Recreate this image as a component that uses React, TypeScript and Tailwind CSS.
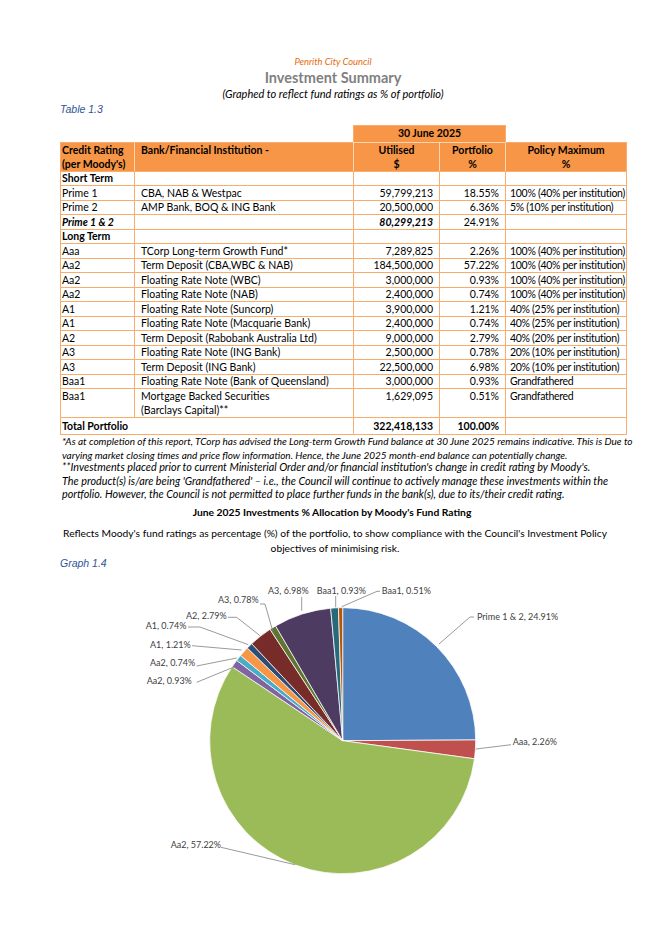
import React from "react";

const F = "font-['Lato',sans-serif]";

type Row = {
  r: string;
  b: string;
  u: string;
  p: string;
  m: string;
  kind?: "section" | "sub";
};

const rows: Row[] = [
  { r: "Short Term", b: "", u: "", p: "", m: "", kind: "section" },
  { r: "Prime 1", b: "CBA, NAB & Westpac", u: "59,799,213", p: "18.55%", m: "100% (40% per institution)" },
  { r: "Prime 2", b: "AMP Bank, BOQ & ING Bank", u: "20,500,000", p: "6.36%", m: "5% (10% per institution)" },
  { r: "Prime 1 & 2", b: "", u: "80,299,213", p: "24.91%", m: "", kind: "sub" },
  { r: "Long Term", b: "", u: "", p: "", m: "", kind: "section" },
  { r: "Aaa", b: "TCorp Long-term Growth Fund*", u: "7,289,825", p: "2.26%", m: "100% (40% per institution)" },
  { r: "Aa2", b: "Term Deposit (CBA,WBC & NAB)", u: "184,500,000", p: "57.22%", m: "100% (40% per institution)" },
  { r: "Aa2", b: "Floating Rate Note (WBC)", u: "3,000,000", p: "0.93%", m: "100% (40% per institution)" },
  { r: "Aa2", b: "Floating Rate Note (NAB)", u: "2,400,000", p: "0.74%", m: "100% (40% per institution)" },
  { r: "A1", b: "Floating Rate Note (Suncorp)", u: "3,900,000", p: "1.21%", m: "40% (25% per institution)" },
  { r: "A1", b: "Floating Rate Note (Macquarie Bank)", u: "2,400,000", p: "0.74%", m: "40% (25% per institution)" },
  { r: "A2", b: "Term Deposit (Rabobank Australia Ltd)", u: "9,000,000", p: "2.79%", m: "40% (20% per institution)" },
  { r: "A3", b: "Floating Rate Note (ING Bank)", u: "2,500,000", p: "0.78%", m: "20% (10% per institution)" },
  { r: "A3", b: "Term Deposit (ING Bank)", u: "22,500,000", p: "6.98%", m: "20% (10% per institution)" },
  { r: "Baa1", b: "Floating Rate Note (Bank of Queensland)", u: "3,000,000", p: "0.93%", m: "Grandfathered" },
];

const slices = [
  { v: 24.91, c: "#4f81bd" },
  { v: 2.26, c: "#c0504d" },
  { v: 57.22, c: "#9bbb59" },
  { v: 0.93, c: "#8064a2" },
  { v: 0.74, c: "#4bacc6" },
  { v: 1.21, c: "#f79646" },
  { v: 0.74, c: "#2c4d75" },
  { v: 2.79, c: "#772c2a" },
  { v: 0.78, c: "#5f7530" },
  { v: 6.98, c: "#4d3b62" },
  { v: 0.93, c: "#276a7c" },
  { v: 0.51, c: "#b65708" },
];

const labels = [
  { t: "Prime 1 & 2, 24.91%", x: 477, y: 620.7, pts: "439,645 470,618 474,618" },
  { t: "Aaa, 2.26%", x: 512.7, y: 745.7, pts: "476,750 511,745.7" },
  { t: "Aa2, 57.22%", x: 170.7, y: 848.7, pts: "221,848.3 295,865.7" },
  { t: "Aa2, 0.93%", x: 146.7, y: 684.7, pts: "196.7,683.3 234,668" },
  { t: "Aa2, 0.74%", x: 150, y: 667.3, pts: "196.7,667 236.7,659" },
  { t: "A1, 1.21%", x: 150, y: 649, pts: "192,646.7 241.7,651" },
  { t: "A1, 0.74%", x: 145.7, y: 630.3, pts: "188,628 200,628 248.3,645.7" },
  { t: "A2, 2.79%", x: 186, y: 619.7, pts: "228,618.3 236.7,618.3 260,636.7" },
  { t: "A3, 0.78%", x: 218, y: 604, pts: "260,605 265,605 273.3,634" },
  { t: "A3, 6.98%", x: 268, y: 595.3, pts: "301.7,598 301.7,611.7" },
  { t: "Baa1, 0.93%", x: 316.7, y: 595, pts: "335.7,597 335.7,608.3" },
  { t: "Baa1, 0.51%", x: 381.7, y: 594.7, pts: "380,592.3 377,592.3 341.7,607.7" },
];

function Pie() {
  const cx = 342.7;
  const cy = 741.7;
  const r = 133;
  let acc = 0;
  const paths = slices.map((s, i) => {
    const a0 = (acc / 100) * Math.PI * 2;
    acc += s.v;
    const a1 = (acc / 100) * Math.PI * 2;
    const x0 = cx + r * Math.sin(a0);
    const y0 = cy - r * Math.cos(a0);
    const x1 = cx + r * Math.sin(a1);
    const y1 = cy - r * Math.cos(a1);
    const large = a1 - a0 > Math.PI ? 1 : 0;
    const d = `M${cx},${cy} L${x0},${y0} A${r},${r} 0 ${large} 1 ${x1},${y1} Z`;
    return <path key={i} d={d} fill={s.c} stroke="#ffffff" strokeWidth={0.75} strokeLinejoin="round" />;
  });
  return (
    <svg width={566} height={300} viewBox="60 580 566 300" className="block mt-[8.7px]">
      {paths}
      {labels.map((l, i) => (
        <g key={i}>
          <polyline points={l.pts} fill="none" stroke="#808080" strokeWidth={0.8} />
          <text x={l.x} y={l.y} fontSize={9} fill="#404040" fontFamily="Lato, sans-serif">
            {l.t}
          </text>
        </g>
      ))}
    </svg>
  );
}

const bd = "border border-[#f8ad6c]";
const hd = "border border-[#f8ad6c] border-x-[#fcd5b2]";

export default function App() {
  return (
    <div className={`w-[656px] h-[928px] bg-white text-black ${F} overflow-hidden`}>
      <div className="w-[566px] ml-[60px] pt-[53.7px]">
        <div className="w-[546px] text-center">
          <div className="text-[9.4px] italic text-[#e46c0a] leading-[16px]">Penrith City Council</div>
          <div className="text-[14.5px] font-bold text-[#7f7f7f] leading-[16px]">Investment Summary</div>
          <div className="text-[11px] italic leading-[16px]">(Graphed to reflect fund ratings as % of portfolio)</div>
        </div>
        <div className="font-['Liberation_Sans',sans-serif] text-[10.5px] italic text-[#2f5597] leading-[14px]">
          Table 1.3
        </div>
        <table className="mt-[9.3px] w-[566px] table-fixed border-collapse text-[10.5px] leading-[13px]">
          <colgroup>
            <col className="w-[74px]" />
            <col className="w-[219px]" />
            <col className="w-[86px]" />
            <col className="w-[66px]" />
            <col className="w-[121px]" />
          </colgroup>
          <tbody>
            <tr className="h-[17px]">
              <td colSpan={2} />
              <td
                colSpan={2}
                className="border-x border-t border-b border-x-[#f8ad6c] border-t-[#f8ad6c] border-b-[#fcd5b2] bg-[#f79646] text-center font-bold"
              >
                30 June 2025
              </td>
              <td />
            </tr>
            <tr className="h-[28px] bg-[#f79646] font-bold align-top leading-[14px]">
              <td className={`${hd} border-l-[#f8ad6c] px-[1px]`}>
                <div className="whitespace-nowrap">Credit Rating</div>
                <div className="whitespace-nowrap">(per Moody's)</div>
              </td>
              <td className={`${hd} px-[6px]`}>Bank/Financial Institution -</td>
              <td className={`${hd} text-center`}>
                <div>Utilised</div>
                <div>$</div>
              </td>
              <td className={`${hd} text-center`}>
                <div>Portfolio</div>
                <div>%</div>
              </td>
              <td className={`${hd} border-r-[#f8ad6c] text-center`}>
                <div>Policy Maximum</div>
                <div>%</div>
              </td>
            </tr>
            {rows.map((row, i) => {
              const isSec = row.kind === "section";
              const isSub = row.kind === "sub";
              return (
                <tr key={i} className="h-[14.5px]">
                  <td className={`${bd} px-[1px] whitespace-nowrap ${isSec ? "font-bold" : ""} ${isSub ? "font-bold italic" : ""}`}>
                    {row.r}
                  </td>
                  <td className={`${bd} px-[6px] whitespace-nowrap`}>{row.b}</td>
                  <td className={`${bd} pr-[6px] text-right whitespace-nowrap ${isSub ? "font-bold italic" : ""}`}>{row.u}</td>
                  <td className={`${bd} pr-[6px] text-right whitespace-nowrap`}>{row.p}</td>
                  <td className={`${bd} pl-[4px] pr-0 whitespace-nowrap tracking-[-0.3px]`}>{row.m}</td>
                </tr>
              );
            })}
            <tr className="h-[29px] align-top leading-[14px]">
              <td className={`${bd} px-[1px]`}>Baa1</td>
              <td className={`${bd} px-[6px]`}>
                <div>Mortgage Backed Securities</div>
                <div>(Barclays Capital)**</div>
              </td>
              <td className={`${bd} pr-[6px] text-right`}>1,629,095</td>
              <td className={`${bd} pr-[6px] text-right`}>0.51%</td>
              <td className={`${bd} pl-[4px] tracking-[-0.3px]`}>Grandfathered</td>
            </tr>
            <tr className="h-[16.5px] font-bold">
              <td colSpan={2} className={`${bd} px-[1px]`}>
                Total Portfolio
              </td>
              <td className={`${bd} pr-[6px] text-right`}>322,418,133</td>
              <td className={`${bd} pr-[6px] text-right`}>100.00%</td>
              <td className={bd} />
            </tr>
          </tbody>
        </table>
        <div className="-mt-[1px] pl-[2px] text-[10px] italic leading-[14px] whitespace-nowrap">
          *As at completion of this report, TCorp has advised the Long-term Growth Fund balance at 30 June 2025 remains indicative. This is Due to
          <br />
          varying market closing times and price flow information. Hence, the June 2025 month-end balance can potentially change.
        </div>
        <div className="-mt-[1.5px] pl-[2px] text-[10.8px] italic leading-[13.3px] whitespace-nowrap">
          **Investments placed prior to current Ministerial Order and/or financial institution's change in credit rating by Moody's.
          <br />
          The product(s) is/are being 'Grandfathered' – i.e., the Council will continue to actively manage these investments within the
          <br />
          portfolio. However, the Council is not permitted to place further funds in the bank(s), due to its/their credit rating.
        </div>
        <div className="mt-[5px] w-[544px] text-center text-[10.3px] font-bold leading-[14px]">
          June 2025 Investments % Allocation by Moody's Fund Rating
        </div>
        <div className="mt-[6.8px] w-[550px] text-center text-[10.25px] leading-[14.4px] whitespace-nowrap">
          Reflects Moody's fund ratings as percentage (%) of the portfolio, to show compliance with the Council's Investment Policy
          <br />
          objectives of minimising risk.
        </div>
        <div className="mt-[1.5px] font-['Liberation_Sans',sans-serif] text-[10.5px] italic text-[#2f5597] leading-[14px]">
          Graph 1.4
        </div>
        <Pie />
      </div>
    </div>
  );
}
